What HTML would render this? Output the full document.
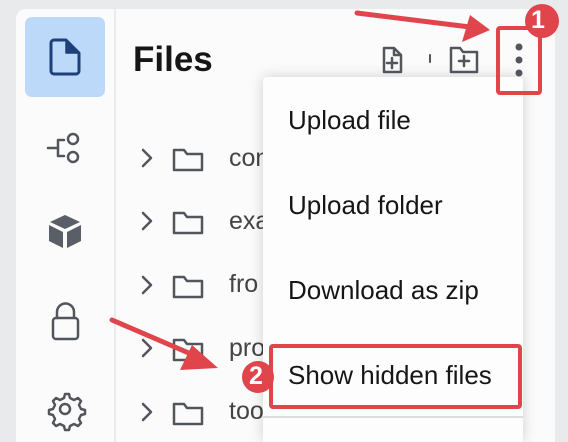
<!DOCTYPE html><html><head><style>
html,body{margin:0;width:568px;height:442px;overflow:hidden}
body{background:#e9eaec;font-family:"Liberation Sans",sans-serif;position:relative}
.panel{position:absolute;left:16px;top:9px;width:539px;height:433px;background:#fbfbfb;border-radius:10px 10px 0 0}
.div{position:absolute;left:114px;top:9px;width:2px;height:433px;background:#ececec}
.act{position:absolute;left:25px;top:17px;width:80px;height:80px;background:#bcd9fa;border-radius:7px}
.t{position:absolute;font-size:25px;color:#444}
.menu{position:absolute;left:263px;top:77px;width:260px;height:365px;background:#fdfdfd;box-shadow:0 0 14px rgba(0,0,0,.18);border-radius:4px 4px 0 0}
.mi{position:absolute;left:25px;font-size:26px;color:#161616}
svg{position:absolute;left:0;top:0}
</style></head><body>
<div class="panel"></div><div class="div"></div><div class="act"></div>
<div style="position:absolute;left:133px;top:40px;font-size:35px;font-weight:bold;color:#161616">Files</div>
<div class="t" style="left:229px;top:144px">con</div>
<div class="t" style="left:229px;top:207px">exa</div>
<div class="t" style="left:229px;top:270px">fro</div>
<div class="t" style="left:229px;top:334px">pro</div>
<div class="t" style="left:229px;top:397px">too</div>
<div class="menu">
<div class="mi" style="top:28px">Upload file</div>
<div class="mi" style="top:113px">Upload folder</div>
<div class="mi" style="top:198px">Download as zip</div>
<div class="mi" style="top:283px">Show hidden files</div>
<div style="position:absolute;left:0;top:339px;width:260px;height:2px;background:#ddd"></div>
</div>
<svg width="568" height="442" fill="none" stroke="#52565c" stroke-width="2.5" stroke-linecap="round" stroke-linejoin="round">
<path d="M54 40h12l13 13v18a3 3 0 0 1-3 3h-22a3 3 0 0 1-3-3v-28a3 3 0 0 1 3-3z" stroke="#1d3f7a" stroke-width="3"/><path d="M66 41v12h12z" fill="#1d3f7a" stroke="#1d3f7a" stroke-width="1.5"/>
<path d="M48 148h10 M58 140v16 M58 140h6 M58 156h6"/><circle cx="73" cy="139" r="5"/><circle cx="73" cy="157" r="5"/>
<path d="M65 215l15 7-15 7-15-7z" fill="#5a5e66" stroke="none"/><path d="M49 225l14 7v16l-14-7z M81 225l-14 7v16l14-7z" fill="#5a5e66" stroke="none"/>
<rect x="53" y="318" width="25" height="21" rx="3"/><path d="M57 318v-6a8.5 8.5 0 0 1 17 0v6"/>
<circle cx="65" cy="409" r="5"/><path d="M65 394l4 0 1 4 4 2 4-2 3 3-2 4 2 4 4 1v4l-4 1-2 4 2 4-3 3-4-2-4 2-1 4h-4l-1-4-4-2-4 2-3-3 2-4-2-4-4-1v-4l4-1 2-4-2-4 3-3 4 2 4-2z"/>
<g><path d="M143 150l8 8-8 8"/><path d="M174 150h10l3 4h15v16h-28z"/></g>
<g transform="translate(0,63)"><path d="M143 150l8 8-8 8"/><path d="M174 150h10l3 4h15v16h-28z"/></g>
<g transform="translate(0,127)"><path d="M143 150l8 8-8 8"/><path d="M174 150h10l3 4h15v16h-28z"/></g>
<g transform="translate(0,190)"><path d="M143 150l8 8-8 8"/><path d="M174 150h10l3 4h15v16h-28z"/></g>
<g transform="translate(0,254)"><path d="M143 150l8 8-8 8"/><path d="M174 150h10l3 4h15v16h-28z"/></g>
<path d="M384 48h10l7 7v17h-17z M394 48v7h7 M392 58v10 M387 63h10"/>
<path d="M430 55v7" stroke-width="2"/>
<path d="M451 48h9l3 4h14v20h-26z M464 56v10 M459 61h10"/>
<g fill="#52565c" stroke="none"><circle cx="519" cy="47" r="3.5"/><circle cx="519" cy="60" r="3.5"/><circle cx="519" cy="73" r="3.5"/></g>
<rect x="498" y="28" width="42" height="65" rx="2" stroke="#e0454c" stroke-width="4"/>
<rect x="271" y="346" width="249" height="61" rx="2" stroke="#e0454c" stroke-width="4"/>
<path d="M357 13L478 28" stroke="#e0454c" stroke-width="5"/><path d="M490 30L462 42L470 15z" fill="#e0454c" stroke="none"/>
<path d="M112 320L205 360" stroke="#e0454c" stroke-width="5"/><path d="M218 368L180 370L192 345z" fill="#e0454c" stroke="none"/>
<circle cx="542" cy="21" r="17" fill="#e0454c" stroke="none"/>
<circle cx="258" cy="377" r="16" fill="#e0454c" stroke="none"/>
</svg>
<div style="position:absolute;left:531px;top:6px;font-size:25px;font-weight:bold;color:#fff">1</div>
<div style="position:absolute;left:249px;top:362px;font-size:25px;font-weight:bold;color:#fff">2</div>
</body></html>
